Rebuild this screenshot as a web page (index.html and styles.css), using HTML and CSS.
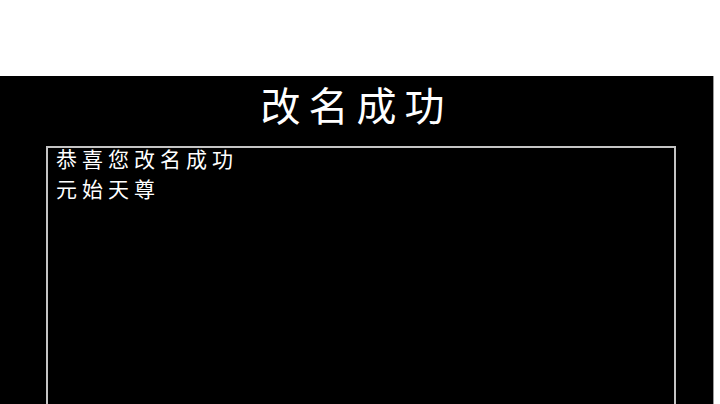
FILE: index.html
```html
<!DOCTYPE html>
<html lang="zh-CN">
<head>
<meta charset="utf-8">
<title>改名成功</title>
<link rel="stylesheet" href="styles.css">
</head>
<body>
<div class="top"></div>
<div class="panel">
  <h1 class="title">改名成功</h1>
  <div class="box">
    <p class="line first">恭喜您改名成功</p>
    <p class="line">元始天尊</p>
  </div>
</div>
</body>
</html>
```
FILE: styles.css
```css
html, body {
  margin: 0;
  padding: 0;
  background: #ffffff;
  overflow: hidden;
}
body {
  width: 720px;
  height: 404px;
  font-family: "Noto Sans CJK SC", "Noto Sans", sans-serif;
}
.top {
  height: 76px;
}
.panel {
  width: 714px;
  height: 328px;
  background: #000000;
  border-right: 1px solid #9a9a9a;
  box-sizing: border-box;
  display: flex;
  flex-direction: column;
}
.title {
  margin: 0 0 14px 0;
  color: #ffffff;
  font-size: 40px;
  font-weight: 400;
  line-height: 56px;
  letter-spacing: 8px;
  text-align: center;
}
.box {
  margin-left: 46px;
  width: 630px;
  flex: 1;
  box-sizing: border-box;
  border: 2px solid #c4c4c4;
  border-bottom: none;
  padding: 0 8px;
}
.line {
  margin: 0;
  color: #ffffff;
  font-size: 21px;
  font-weight: 400;
  line-height: 30px;
  letter-spacing: 5px;
}
.first {
  margin-top: -5px;
}
```
